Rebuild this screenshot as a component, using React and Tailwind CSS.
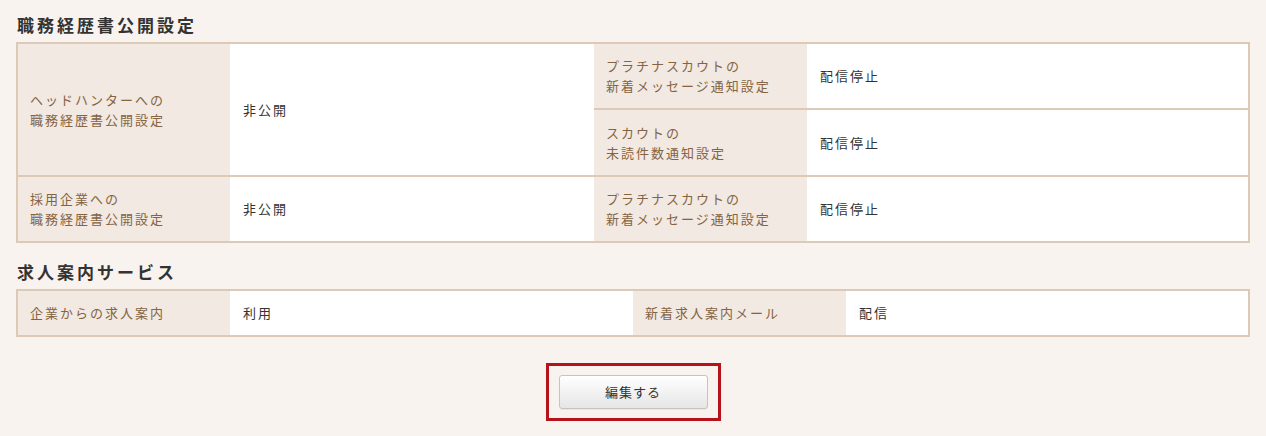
import React from 'react';

const th = 'bg-[#f1e9e2] text-[#856443] text-left font-normal align-middle pl-[12px] pr-2 py-[12px] leading-[20px] border-b-2 border-[#dccab7]';
const td = 'bg-white text-[#333] align-middle pl-[13px] pr-2 py-[12px] leading-[20px] border-b-2 border-[#dccab7]';

function Section({ title, children }) {
  return (
    <section>
      <h2 className="text-[17px] font-bold text-[#333] tracking-[3px] leading-[26px] pl-[1px] mb-[4px]">{title}</h2>
      {children}
    </section>
  );
}

export default function App() {
  return (
    <div
      className="w-[1266px] h-[436px] bg-[#f8f3ee] px-[16px] pt-[12px] text-[13px] tracking-[2px]"
      style={{ fontFamily: '"Noto Sans CJK JP", "Noto Sans", sans-serif' }}
    >
      <Section title="職務経歴書公開設定">
        <table className="w-[1234px] table-fixed border-collapse border-2 border-[#dccab7]">
          <colgroup>
            <col className="w-[213px]" />
            <col className="w-[364px]" />
            <col className="w-[213px]" />
            <col />
          </colgroup>
          <tbody>
            <tr className="h-[65px]">
              <th rowSpan={2} className={th}>ヘッドハンターへの<br />職務経歴書公開設定</th>
              <td rowSpan={2} className={td}>非公開</td>
              <th className={th}>プラチナスカウトの<br />新着メッセージ通知設定</th>
              <td className={td}>配信停止</td>
            </tr>
            <tr className="h-[67px]">
              <th className={th}>スカウトの<br />未読件数通知設定</th>
              <td className={td}>配信停止</td>
            </tr>
            <tr className="h-[66px]">
              <th className={th}>採用企業への<br />職務経歴書公開設定</th>
              <td className={td}>非公開</td>
              <th className={th}>プラチナスカウトの<br />新着メッセージ通知設定</th>
              <td className={td}>配信停止</td>
            </tr>
          </tbody>
        </table>
      </Section>

      <div className="mt-[16px]">
        <Section title="求人案内サービス">
          <table className="w-[1234px] table-fixed border-collapse border-2 border-[#dccab7]">
            <colgroup>
              <col className="w-[213px]" />
              <col className="w-[403px]" />
              <col className="w-[213px]" />
              <col />
            </colgroup>
            <tbody>
              <tr className="h-[46px]">
                <th className={th}>企業からの求人案内</th>
                <td className={td}>利用</td>
                <th className={th}>新着求人案内メール</th>
                <td className={td}>配信</td>
              </tr>
            </tbody>
          </table>
        </Section>
      </div>

      <div className="flex justify-center mt-[26px]">
        <div className="border-[3px] border-[#b5121b] px-[10px] py-[9px]">
          <button className="w-[149px] h-[34px] rounded-[3px] border border-[#c4c4c4] bg-gradient-to-b from-white to-[#e6e6e6] text-[#333] text-[13px] tracking-[1px] shadow-[0_1px_0_rgba(0,0,0,0.05)]">
            編集する
          </button>
        </div>
      </div>
    </div>
  );
}
